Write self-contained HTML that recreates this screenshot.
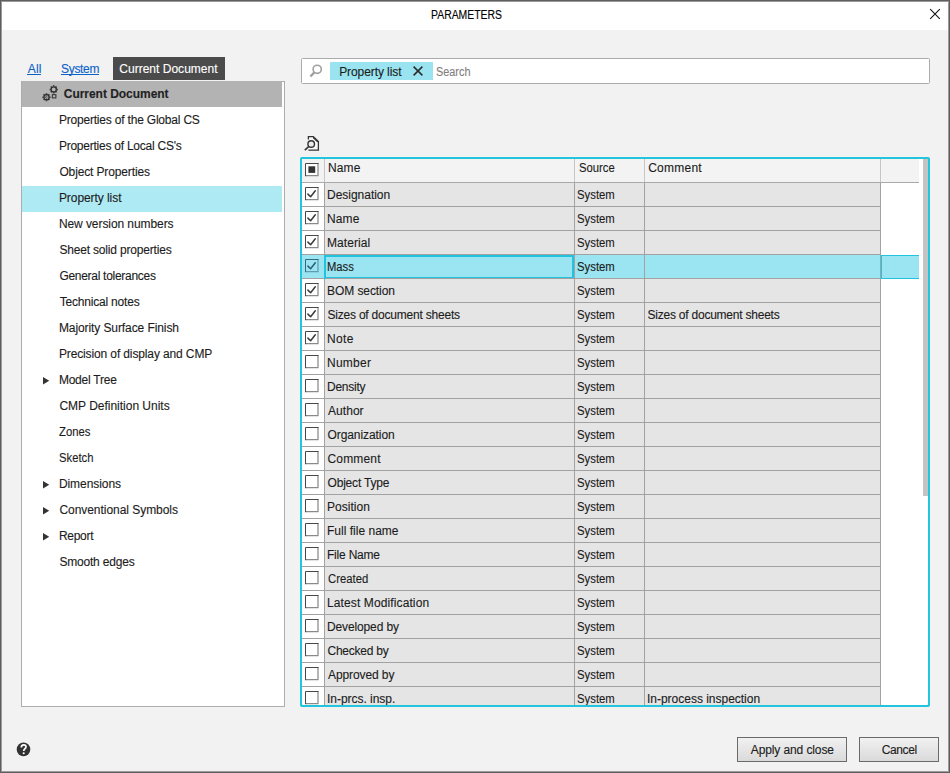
<!DOCTYPE html>
<html><head><meta charset="utf-8"><title>PARAMETERS</title>
<style>
html,body{margin:0;padding:0}
body{width:950px;height:773px;position:relative;overflow:hidden;background:#f2f2f2;font-family:"Liberation Sans",sans-serif;font-size:12px;color:#1c1c1c}
body div,body span.t,body svg{position:absolute}
span.t{line-height:16px;white-space:pre;display:block;-webkit-text-stroke:0.12px currentColor}
.w{color:#fff}.g{color:#7f7f7f}.b{font-weight:bold;-webkit-text-stroke:0;color:#222}
.lnk{color:#0b63c9}
</style></head><body>

<div style="left:0px;top:0px;width:950px;height:773px;background:#5e5e5e;"></div>
<div style="left:1px;top:1px;width:948px;height:771px;background:#9a9a9a;"></div>
<div style="left:2px;top:2px;width:946px;height:769px;background:#f2f2f2;"></div>
<div style="left:2px;top:2px;width:946px;height:28px;background:#ffffff;"></div>
<span class="t " style="left:431.13px;top:7.00px;transform-origin:0 0;transform:scaleX(0.8685);color:#000;">PARAMETERS</span>
<svg style="left:927px;top:6px" width="16" height="16" viewBox="0 0 16 16"><path d="M3.2 3.2 L12.8 12.8 M12.8 3.2 L3.2 12.8" stroke="#111" stroke-width="1.1" fill="none"/></svg>
<span class="t lnk" style="left:27.80px;top:61.00px;letter-spacing:0.150px;">All</span>
<div style="left:27px;top:74px;width:14px;height:1px;background:#0b63c9;"></div>
<span class="t lnk" style="left:61.10px;top:61.00px;letter-spacing:-0.330px;">System</span>
<div style="left:61px;top:74px;width:38px;height:1px;background:#0b63c9;"></div>
<div style="left:113px;top:57px;width:112px;height:23px;background:#4b4b4b;"></div>
<span class="t w" style="left:119.30px;top:61.00px;letter-spacing:0.013px;">Current Document</span>
<div style="left:21px;top:81px;width:264px;height:626px;background:#adadad;"></div>
<div style="left:22px;top:82px;width:262px;height:624px;background:#ffffff;"></div>
<div style="left:22px;top:81px;width:260px;height:26px;background:#b3b3b3;"></div>
<span class="t b" style="left:63.80px;top:86.00px;letter-spacing:-0.037px;">Current Document</span>
<svg style="left:40px;top:83px" width="20" height="22" viewBox="0 0 20 22"><g fill="none" stroke="#2c2c2c"><circle cx="13.70" cy="6.40" r="2.60" stroke-width="1.30"/><path d="M16.70 6.40 L17.75 6.40 M15.82 8.52 L16.56 9.26 M13.70 9.40 L13.70 10.45 M11.58 8.52 L10.84 9.26 M10.70 6.40 L9.65 6.40 M11.58 4.28 L10.84 3.54 M13.70 3.40 L13.70 2.35 M15.82 4.28 L16.56 3.54 " stroke-width="1.50"/><circle cx="6.50" cy="14.20" r="2.60" stroke-width="1.30"/><path d="M9.50 14.20 L10.55 14.20 M8.62 16.32 L9.36 17.06 M6.50 17.20 L6.50 18.25 M4.38 16.32 L3.64 17.06 M3.50 14.20 L2.45 14.20 M4.38 12.08 L3.64 11.34 M6.50 11.20 L6.50 10.15 M8.62 12.08 L9.36 11.34 " stroke-width="1.50"/><rect x="12.3" y="11.7" width="3.6" height="3.2" stroke-width="1"/><path d="M7.3 13.6 A1 1 0 1 0 7.4 14.8" stroke-width="0.8"/></g></svg>
<span class="t " style="left:58.90px;top:112.00px;letter-spacing:-0.196px;">Properties of the Global CS</span>
<span class="t " style="left:58.90px;top:138.00px;letter-spacing:-0.239px;">Properties of Local CS&#x27;s</span>
<span class="t " style="left:59.40px;top:164.00px;letter-spacing:-0.134px;">Object Properties</span>
<div style="left:22px;top:186px;width:260px;height:26px;background:#aeeaf4;"></div>
<span class="t " style="left:58.90px;top:190.00px;letter-spacing:-0.062px;">Property list</span>
<span class="t " style="left:58.90px;top:216.00px;letter-spacing:-0.075px;">New version numbers</span>
<span class="t " style="left:59.40px;top:242.00px;letter-spacing:-0.179px;">Sheet solid properties</span>
<span class="t " style="left:59.40px;top:268.00px;letter-spacing:-0.288px;">General tolerances</span>
<span class="t " style="left:59.65px;top:294.00px;letter-spacing:-0.193px;">Technical notes</span>
<span class="t " style="left:58.90px;top:320.00px;letter-spacing:-0.089px;">Majority Surface Finish</span>
<span class="t " style="left:58.90px;top:346.00px;letter-spacing:-0.124px;">Precision of display and CMP</span>
<span class="t " style="left:58.90px;top:372.00px;letter-spacing:-0.222px;">Model Tree</span>
<svg style="left:42px;top:376px" width="9" height="10" viewBox="0 0 9 10"><path d="M1 1 L7.2 4.8 L1 8.6 Z" fill="#333"/></svg>
<span class="t " style="left:59.40px;top:398.00px;letter-spacing:-0.011px;">CMP Definition Units</span>
<span class="t " style="left:59.43px;top:424.00px;transform-origin:0 0;transform:scaleX(0.9415);">Zones</span>
<span class="t " style="left:59.43px;top:450.00px;transform-origin:0 0;transform:scaleX(0.9380);">Sketch</span>
<span class="t " style="left:58.90px;top:476.00px;letter-spacing:-0.061px;">Dimensions</span>
<svg style="left:42px;top:480px" width="9" height="10" viewBox="0 0 9 10"><path d="M1 1 L7.2 4.8 L1 8.6 Z" fill="#333"/></svg>
<span class="t " style="left:59.40px;top:502.00px;letter-spacing:-0.042px;">Conventional Symbols</span>
<svg style="left:42px;top:506px" width="9" height="10" viewBox="0 0 9 10"><path d="M1 1 L7.2 4.8 L1 8.6 Z" fill="#333"/></svg>
<span class="t " style="left:58.90px;top:528.00px;letter-spacing:-0.280px;">Report</span>
<svg style="left:42px;top:532px" width="9" height="10" viewBox="0 0 9 10"><path d="M1 1 L7.2 4.8 L1 8.6 Z" fill="#333"/></svg>
<span class="t " style="left:59.40px;top:554.00px;letter-spacing:-0.191px;">Smooth edges</span>
<div style="left:301px;top:58px;width:627px;height:24px;background:#fff;border:1px solid #ababab;border-radius:1.5px"></div>
<svg style="left:306px;top:62px" width="18" height="18" viewBox="0 0 18 18"><circle cx="11.2" cy="7.3" r="4.1" fill="none" stroke="#a0a0a0" stroke-width="1.6"/><path d="M8.4 10.4 L4.4 14.5" stroke="#a0a0a0" stroke-width="2.4" fill="none"/></svg>
<div style="left:330px;top:62px;width:103px;height:18px;background:#99e4f0;"></div>
<span class="t " style="left:339.20px;top:64.00px;letter-spacing:-0.088px;">Property list</span>
<svg style="left:411px;top:64px" width="14" height="14" viewBox="0 0 14 14"><path d="M2.6 2.6 L11.4 11.4 M11.4 2.6 L2.6 11.4" stroke="#2b2b2b" stroke-width="1.5" fill="none"/></svg>
<span class="t g" style="left:436.45px;top:64.00px;transform-origin:0 0;transform:scaleX(0.9061);">Search</span>
<svg style="left:302px;top:133px" width="20" height="20" viewBox="0 0 20 20">
<path d="M6.4 17.2 L6.4 3.7 L11.3 3.7 L16.4 8.6 L16.4 17.2 Z" fill="#f9f9f9" stroke="none"/>
<path d="M6.4 6.4 L6.4 3.7 L11.3 3.7 L16.4 8.6 L16.4 17.2 L6.4 17.2" fill="none" stroke="#333" stroke-width="1.3"/>
<path d="M11.3 3.7 L16.4 8.6 L15.2 9.2 L10.8 4.9 Z" fill="#333"/>
<circle cx="9.2" cy="11" r="4.3" fill="#f2f2f2" stroke="none"/><circle cx="9.2" cy="11" r="3.3" fill="#ebebeb" stroke="#333" stroke-width="1.4"/>
<path d="M6.8 13.5 L2.8 17.2" stroke="#333" stroke-width="1.7" fill="none"/></svg>
<div style="left:300px;top:157px;width:630px;height:550px;background:#22c5e0;border-radius:2px;"></div>
<div style="left:302px;top:159px;width:626px;height:546px;background:#ffffff;border-radius:1px;"></div>
<div style="left:302px;top:159px;width:617px;height:23px;background:#f3f3f3;"></div>
<div style="left:302px;top:182px;width:617px;height:1px;background:#a9a9a9;"></div>
<div style="left:324px;top:159px;width:1px;height:23px;background:#c6c6c6;"></div>
<div style="left:574px;top:159px;width:1px;height:23px;background:#c6c6c6;"></div>
<div style="left:644px;top:159px;width:1px;height:23px;background:#c6c6c6;"></div>
<div style="left:880px;top:159px;width:1px;height:23px;background:#c6c6c6;"></div>
<span class="t " style="left:328.00px;top:160.00px;letter-spacing:0.100px;">Name</span>
<span class="t " style="left:578.53px;top:160.00px;transform-origin:0 0;transform:scaleX(0.9405);">Source</span>
<span class="t " style="left:648.20px;top:160.00px;letter-spacing:0.250px;">Comment</span>
<div style="left:923px;top:159px;width:5px;height:337px;background:#c4c4c4;"></div>
<svg style="left:305px;top:163px" width="15" height="14" viewBox="0 0 15 14"><rect x="0.5" y="0.5" width="12.7" height="12.2" fill="#ffffff" stroke="none"/><path d="M13.0 0.5 L13.0 12.6 L0.5 12.6" fill="none" stroke="#8a8a8a" stroke-width="1.25"/><path d="M0.5 13.2 L0.5 0.5 L13.6 0.5" fill="none" stroke="#484848" stroke-width="1"/><rect x="3.4" y="3.3" width="6.8" height="6.6" fill="#333"/></svg>
<div style="left:0;top:0;width:950px;height:705px;overflow:hidden">
<div style="left:325px;top:183px;width:249px;height:23px;background:#e5e5e5;"></div>
<div style="left:575px;top:183px;width:69px;height:23px;background:#e5e5e5;"></div>
<div style="left:645px;top:183px;width:235px;height:23px;background:#e5e5e5;"></div>
<div style="left:302px;top:206px;width:579px;height:1px;background:#a2a2a2;"></div>
<svg style="left:305px;top:187px" width="15" height="14" viewBox="0 0 15 14"><rect x="0.5" y="0.5" width="12.7" height="12.2" fill="#ffffff" stroke="none"/><path d="M13.0 0.5 L13.0 12.6 L0.5 12.6" fill="none" stroke="#8a8a8a" stroke-width="1.25"/><path d="M0.5 13.2 L0.5 0.5 L13.6 0.5" fill="none" stroke="#484848" stroke-width="1"/><path d="M2.9 7.1 L5.6 9.8 L10.3 3.8" fill="none" stroke="#3c3c3c" stroke-width="1.5" stroke-linejoin="round" stroke-linecap="round"/></svg>
<span class="t " style="left:327.00px;top:187.00px;letter-spacing:-0.020px;">Designation</span>
<span class="t " style="left:577.43px;top:187.00px;transform-origin:0 0;transform:scaleX(0.9445);">System</span>
<div style="left:325px;top:207px;width:249px;height:23px;background:#e5e5e5;"></div>
<div style="left:575px;top:207px;width:69px;height:23px;background:#e5e5e5;"></div>
<div style="left:645px;top:207px;width:235px;height:23px;background:#e5e5e5;"></div>
<div style="left:302px;top:230px;width:579px;height:1px;background:#a2a2a2;"></div>
<svg style="left:305px;top:211px" width="15" height="14" viewBox="0 0 15 14"><rect x="0.5" y="0.5" width="12.7" height="12.2" fill="#ffffff" stroke="none"/><path d="M13.0 0.5 L13.0 12.6 L0.5 12.6" fill="none" stroke="#8a8a8a" stroke-width="1.25"/><path d="M0.5 13.2 L0.5 0.5 L13.6 0.5" fill="none" stroke="#484848" stroke-width="1"/><path d="M2.9 7.1 L5.6 9.8 L10.3 3.8" fill="none" stroke="#3c3c3c" stroke-width="1.5" stroke-linejoin="round" stroke-linecap="round"/></svg>
<span class="t " style="left:327.00px;top:211.00px;letter-spacing:0.100px;">Name</span>
<span class="t " style="left:577.43px;top:211.00px;transform-origin:0 0;transform:scaleX(0.9445);">System</span>
<div style="left:325px;top:231px;width:249px;height:23px;background:#e5e5e5;"></div>
<div style="left:575px;top:231px;width:69px;height:23px;background:#e5e5e5;"></div>
<div style="left:645px;top:231px;width:235px;height:23px;background:#e5e5e5;"></div>
<div style="left:302px;top:254px;width:579px;height:1px;background:#a2a2a2;"></div>
<svg style="left:305px;top:235px" width="15" height="14" viewBox="0 0 15 14"><rect x="0.5" y="0.5" width="12.7" height="12.2" fill="#ffffff" stroke="none"/><path d="M13.0 0.5 L13.0 12.6 L0.5 12.6" fill="none" stroke="#8a8a8a" stroke-width="1.25"/><path d="M0.5 13.2 L0.5 0.5 L13.6 0.5" fill="none" stroke="#484848" stroke-width="1"/><path d="M2.9 7.1 L5.6 9.8 L10.3 3.8" fill="none" stroke="#3c3c3c" stroke-width="1.5" stroke-linejoin="round" stroke-linecap="round"/></svg>
<span class="t " style="left:327.00px;top:235.00px;letter-spacing:0.086px;">Material</span>
<span class="t " style="left:577.43px;top:235.00px;transform-origin:0 0;transform:scaleX(0.9445);">System</span>
<div style="left:302px;top:255px;width:22px;height:23px;background:#9ae5f1;"></div>
<div style="left:324px;top:255px;width:250px;height:24px;background:#9ae5f1;box-sizing:border-box;border:2px solid #22c3de;"></div>
<div style="left:575px;top:255px;width:69px;height:23px;background:#9ae5f1;"></div>
<div style="left:645px;top:255px;width:235px;height:23px;background:#9ae5f1;"></div>
<div style="left:881px;top:255px;width:38px;height:24px;background:#9ae5f1;box-sizing:border-box;border:1px solid #22c3de;border-right:none;"></div>
<div style="left:302px;top:278px;width:579px;height:1px;background:#a2a2a2;"></div>
<svg style="left:305px;top:259px" width="15" height="14" viewBox="0 0 15 14"><rect x="0.5" y="0.5" width="12.7" height="12.2" fill="none" stroke="none"/><path d="M13.0 0.5 L13.0 12.6 L0.5 12.6" fill="none" stroke="#5f9db3" stroke-width="1.25"/><path d="M0.5 13.2 L0.5 0.5 L13.6 0.5" fill="none" stroke="#356a82" stroke-width="1"/><path d="M2.9 7.1 L5.6 9.8 L10.3 3.8" fill="none" stroke="#2d5e78" stroke-width="1.5" stroke-linejoin="round" stroke-linecap="round"/></svg>
<span class="t " style="left:327.06px;top:259.00px;transform-origin:0 0;transform:scaleX(0.9358);">Mass</span>
<span class="t " style="left:577.43px;top:259.00px;transform-origin:0 0;transform:scaleX(0.9445);">System</span>
<div style="left:325px;top:279px;width:249px;height:23px;background:#e5e5e5;"></div>
<div style="left:575px;top:279px;width:69px;height:23px;background:#e5e5e5;"></div>
<div style="left:645px;top:279px;width:235px;height:23px;background:#e5e5e5;"></div>
<div style="left:302px;top:302px;width:579px;height:1px;background:#a2a2a2;"></div>
<svg style="left:305px;top:283px" width="15" height="14" viewBox="0 0 15 14"><rect x="0.5" y="0.5" width="12.7" height="12.2" fill="#ffffff" stroke="none"/><path d="M13.0 0.5 L13.0 12.6 L0.5 12.6" fill="none" stroke="#8a8a8a" stroke-width="1.25"/><path d="M0.5 13.2 L0.5 0.5 L13.6 0.5" fill="none" stroke="#484848" stroke-width="1"/><path d="M2.9 7.1 L5.6 9.8 L10.3 3.8" fill="none" stroke="#3c3c3c" stroke-width="1.5" stroke-linejoin="round" stroke-linecap="round"/></svg>
<span class="t " style="left:327.00px;top:283.00px;letter-spacing:-0.070px;">BOM section</span>
<span class="t " style="left:577.43px;top:283.00px;transform-origin:0 0;transform:scaleX(0.9445);">System</span>
<div style="left:325px;top:303px;width:249px;height:23px;background:#e5e5e5;"></div>
<div style="left:575px;top:303px;width:69px;height:23px;background:#e5e5e5;"></div>
<div style="left:645px;top:303px;width:235px;height:23px;background:#e5e5e5;"></div>
<div style="left:302px;top:326px;width:579px;height:1px;background:#a2a2a2;"></div>
<svg style="left:305px;top:307px" width="15" height="14" viewBox="0 0 15 14"><rect x="0.5" y="0.5" width="12.7" height="12.2" fill="#ffffff" stroke="none"/><path d="M13.0 0.5 L13.0 12.6 L0.5 12.6" fill="none" stroke="#8a8a8a" stroke-width="1.25"/><path d="M0.5 13.2 L0.5 0.5 L13.6 0.5" fill="none" stroke="#484848" stroke-width="1"/><path d="M2.9 7.1 L5.6 9.8 L10.3 3.8" fill="none" stroke="#3c3c3c" stroke-width="1.5" stroke-linejoin="round" stroke-linecap="round"/></svg>
<span class="t " style="left:327.50px;top:307.00px;letter-spacing:-0.213px;">Sizes of document sheets</span>
<span class="t " style="left:577.43px;top:307.00px;transform-origin:0 0;transform:scaleX(0.9445);">System</span>
<span class="t " style="left:647.50px;top:307.00px;letter-spacing:-0.226px;">Sizes of document sheets</span>
<div style="left:325px;top:327px;width:249px;height:23px;background:#e5e5e5;"></div>
<div style="left:575px;top:327px;width:69px;height:23px;background:#e5e5e5;"></div>
<div style="left:645px;top:327px;width:235px;height:23px;background:#e5e5e5;"></div>
<div style="left:302px;top:350px;width:579px;height:1px;background:#a2a2a2;"></div>
<svg style="left:305px;top:331px" width="15" height="14" viewBox="0 0 15 14"><rect x="0.5" y="0.5" width="12.7" height="12.2" fill="#ffffff" stroke="none"/><path d="M13.0 0.5 L13.0 12.6 L0.5 12.6" fill="none" stroke="#8a8a8a" stroke-width="1.25"/><path d="M0.5 13.2 L0.5 0.5 L13.6 0.5" fill="none" stroke="#484848" stroke-width="1"/><path d="M2.9 7.1 L5.6 9.8 L10.3 3.8" fill="none" stroke="#3c3c3c" stroke-width="1.5" stroke-linejoin="round" stroke-linecap="round"/></svg>
<span class="t " style="left:327.00px;top:331.00px;letter-spacing:0.350px;">Note</span>
<span class="t " style="left:577.43px;top:331.00px;transform-origin:0 0;transform:scaleX(0.9445);">System</span>
<div style="left:325px;top:351px;width:249px;height:23px;background:#e5e5e5;"></div>
<div style="left:575px;top:351px;width:69px;height:23px;background:#e5e5e5;"></div>
<div style="left:645px;top:351px;width:235px;height:23px;background:#e5e5e5;"></div>
<div style="left:302px;top:374px;width:579px;height:1px;background:#a2a2a2;"></div>
<svg style="left:305px;top:355px" width="15" height="14" viewBox="0 0 15 14"><rect x="0.5" y="0.5" width="12.7" height="12.2" fill="#ffffff" stroke="none"/><path d="M13.0 0.5 L13.0 12.6 L0.5 12.6" fill="none" stroke="#8a8a8a" stroke-width="1.25"/><path d="M0.5 13.2 L0.5 0.5 L13.6 0.5" fill="none" stroke="#484848" stroke-width="1"/></svg>
<span class="t " style="left:327.00px;top:355.00px;letter-spacing:0.240px;">Number</span>
<span class="t " style="left:577.43px;top:355.00px;transform-origin:0 0;transform:scaleX(0.9445);">System</span>
<div style="left:325px;top:375px;width:249px;height:23px;background:#e5e5e5;"></div>
<div style="left:575px;top:375px;width:69px;height:23px;background:#e5e5e5;"></div>
<div style="left:645px;top:375px;width:235px;height:23px;background:#e5e5e5;"></div>
<div style="left:302px;top:398px;width:579px;height:1px;background:#a2a2a2;"></div>
<svg style="left:305px;top:379px" width="15" height="14" viewBox="0 0 15 14"><rect x="0.5" y="0.5" width="12.7" height="12.2" fill="#ffffff" stroke="none"/><path d="M13.0 0.5 L13.0 12.6 L0.5 12.6" fill="none" stroke="#8a8a8a" stroke-width="1.25"/><path d="M0.5 13.2 L0.5 0.5 L13.6 0.5" fill="none" stroke="#484848" stroke-width="1"/></svg>
<span class="t " style="left:327.00px;top:379.00px;letter-spacing:-0.233px;">Density</span>
<span class="t " style="left:577.43px;top:379.00px;transform-origin:0 0;transform:scaleX(0.9445);">System</span>
<div style="left:325px;top:399px;width:249px;height:23px;background:#e5e5e5;"></div>
<div style="left:575px;top:399px;width:69px;height:23px;background:#e5e5e5;"></div>
<div style="left:645px;top:399px;width:235px;height:23px;background:#e5e5e5;"></div>
<div style="left:302px;top:422px;width:579px;height:1px;background:#a2a2a2;"></div>
<svg style="left:305px;top:403px" width="15" height="14" viewBox="0 0 15 14"><rect x="0.5" y="0.5" width="12.7" height="12.2" fill="#ffffff" stroke="none"/><path d="M13.0 0.5 L13.0 12.6 L0.5 12.6" fill="none" stroke="#8a8a8a" stroke-width="1.25"/><path d="M0.5 13.2 L0.5 0.5 L13.6 0.5" fill="none" stroke="#484848" stroke-width="1"/></svg>
<span class="t " style="left:328.00px;top:403.00px;letter-spacing:0.050px;">Author</span>
<span class="t " style="left:577.43px;top:403.00px;transform-origin:0 0;transform:scaleX(0.9445);">System</span>
<div style="left:325px;top:423px;width:249px;height:23px;background:#e5e5e5;"></div>
<div style="left:575px;top:423px;width:69px;height:23px;background:#e5e5e5;"></div>
<div style="left:645px;top:423px;width:235px;height:23px;background:#e5e5e5;"></div>
<div style="left:302px;top:446px;width:579px;height:1px;background:#a2a2a2;"></div>
<svg style="left:305px;top:427px" width="15" height="14" viewBox="0 0 15 14"><rect x="0.5" y="0.5" width="12.7" height="12.2" fill="#ffffff" stroke="none"/><path d="M13.0 0.5 L13.0 12.6 L0.5 12.6" fill="none" stroke="#8a8a8a" stroke-width="1.25"/><path d="M0.5 13.2 L0.5 0.5 L13.6 0.5" fill="none" stroke="#484848" stroke-width="1"/></svg>
<span class="t " style="left:327.50px;top:427.00px;letter-spacing:-0.077px;">Organization</span>
<span class="t " style="left:577.43px;top:427.00px;transform-origin:0 0;transform:scaleX(0.9445);">System</span>
<div style="left:325px;top:447px;width:249px;height:23px;background:#e5e5e5;"></div>
<div style="left:575px;top:447px;width:69px;height:23px;background:#e5e5e5;"></div>
<div style="left:645px;top:447px;width:235px;height:23px;background:#e5e5e5;"></div>
<div style="left:302px;top:470px;width:579px;height:1px;background:#a2a2a2;"></div>
<svg style="left:305px;top:451px" width="15" height="14" viewBox="0 0 15 14"><rect x="0.5" y="0.5" width="12.7" height="12.2" fill="#ffffff" stroke="none"/><path d="M13.0 0.5 L13.0 12.6 L0.5 12.6" fill="none" stroke="#8a8a8a" stroke-width="1.25"/><path d="M0.5 13.2 L0.5 0.5 L13.6 0.5" fill="none" stroke="#484848" stroke-width="1"/></svg>
<span class="t " style="left:327.50px;top:451.00px;letter-spacing:0.167px;">Comment</span>
<span class="t " style="left:577.43px;top:451.00px;transform-origin:0 0;transform:scaleX(0.9445);">System</span>
<div style="left:325px;top:471px;width:249px;height:23px;background:#e5e5e5;"></div>
<div style="left:575px;top:471px;width:69px;height:23px;background:#e5e5e5;"></div>
<div style="left:645px;top:471px;width:235px;height:23px;background:#e5e5e5;"></div>
<div style="left:302px;top:494px;width:579px;height:1px;background:#a2a2a2;"></div>
<svg style="left:305px;top:475px" width="15" height="14" viewBox="0 0 15 14"><rect x="0.5" y="0.5" width="12.7" height="12.2" fill="#ffffff" stroke="none"/><path d="M13.0 0.5 L13.0 12.6 L0.5 12.6" fill="none" stroke="#8a8a8a" stroke-width="1.25"/><path d="M0.5 13.2 L0.5 0.5 L13.6 0.5" fill="none" stroke="#484848" stroke-width="1"/></svg>
<span class="t " style="left:327.50px;top:475.00px;letter-spacing:-0.185px;">Object Type</span>
<span class="t " style="left:577.43px;top:475.00px;transform-origin:0 0;transform:scaleX(0.9445);">System</span>
<div style="left:325px;top:495px;width:249px;height:23px;background:#e5e5e5;"></div>
<div style="left:575px;top:495px;width:69px;height:23px;background:#e5e5e5;"></div>
<div style="left:645px;top:495px;width:235px;height:23px;background:#e5e5e5;"></div>
<div style="left:302px;top:518px;width:579px;height:1px;background:#a2a2a2;"></div>
<svg style="left:305px;top:499px" width="15" height="14" viewBox="0 0 15 14"><rect x="0.5" y="0.5" width="12.7" height="12.2" fill="#ffffff" stroke="none"/><path d="M13.0 0.5 L13.0 12.6 L0.5 12.6" fill="none" stroke="#8a8a8a" stroke-width="1.25"/><path d="M0.5 13.2 L0.5 0.5 L13.6 0.5" fill="none" stroke="#484848" stroke-width="1"/></svg>
<span class="t " style="left:327.00px;top:499.00px;letter-spacing:0.029px;">Position</span>
<span class="t " style="left:577.43px;top:499.00px;transform-origin:0 0;transform:scaleX(0.9445);">System</span>
<div style="left:325px;top:519px;width:249px;height:23px;background:#e5e5e5;"></div>
<div style="left:575px;top:519px;width:69px;height:23px;background:#e5e5e5;"></div>
<div style="left:645px;top:519px;width:235px;height:23px;background:#e5e5e5;"></div>
<div style="left:302px;top:542px;width:579px;height:1px;background:#a2a2a2;"></div>
<svg style="left:305px;top:523px" width="15" height="14" viewBox="0 0 15 14"><rect x="0.5" y="0.5" width="12.7" height="12.2" fill="#ffffff" stroke="none"/><path d="M13.0 0.5 L13.0 12.6 L0.5 12.6" fill="none" stroke="#8a8a8a" stroke-width="1.25"/><path d="M0.5 13.2 L0.5 0.5 L13.6 0.5" fill="none" stroke="#484848" stroke-width="1"/></svg>
<span class="t " style="left:327.00px;top:523.00px;letter-spacing:0.012px;">Full file name</span>
<span class="t " style="left:577.43px;top:523.00px;transform-origin:0 0;transform:scaleX(0.9445);">System</span>
<div style="left:325px;top:543px;width:249px;height:23px;background:#e5e5e5;"></div>
<div style="left:575px;top:543px;width:69px;height:23px;background:#e5e5e5;"></div>
<div style="left:645px;top:543px;width:235px;height:23px;background:#e5e5e5;"></div>
<div style="left:302px;top:566px;width:579px;height:1px;background:#a2a2a2;"></div>
<svg style="left:305px;top:547px" width="15" height="14" viewBox="0 0 15 14"><rect x="0.5" y="0.5" width="12.7" height="12.2" fill="#ffffff" stroke="none"/><path d="M13.0 0.5 L13.0 12.6 L0.5 12.6" fill="none" stroke="#8a8a8a" stroke-width="1.25"/><path d="M0.5 13.2 L0.5 0.5 L13.6 0.5" fill="none" stroke="#484848" stroke-width="1"/></svg>
<span class="t " style="left:327.00px;top:547.00px;letter-spacing:-0.206px;">File Name</span>
<span class="t " style="left:577.43px;top:547.00px;transform-origin:0 0;transform:scaleX(0.9445);">System</span>
<div style="left:325px;top:567px;width:249px;height:23px;background:#e5e5e5;"></div>
<div style="left:575px;top:567px;width:69px;height:23px;background:#e5e5e5;"></div>
<div style="left:645px;top:567px;width:235px;height:23px;background:#e5e5e5;"></div>
<div style="left:302px;top:590px;width:579px;height:1px;background:#a2a2a2;"></div>
<svg style="left:305px;top:571px" width="15" height="14" viewBox="0 0 15 14"><rect x="0.5" y="0.5" width="12.7" height="12.2" fill="#ffffff" stroke="none"/><path d="M13.0 0.5 L13.0 12.6 L0.5 12.6" fill="none" stroke="#8a8a8a" stroke-width="1.25"/><path d="M0.5 13.2 L0.5 0.5 L13.6 0.5" fill="none" stroke="#484848" stroke-width="1"/></svg>
<span class="t " style="left:327.53px;top:571.00px;transform-origin:0 0;transform:scaleX(0.9422);">Created</span>
<span class="t " style="left:577.43px;top:571.00px;transform-origin:0 0;transform:scaleX(0.9445);">System</span>
<div style="left:325px;top:591px;width:249px;height:23px;background:#e5e5e5;"></div>
<div style="left:575px;top:591px;width:69px;height:23px;background:#e5e5e5;"></div>
<div style="left:645px;top:591px;width:235px;height:23px;background:#e5e5e5;"></div>
<div style="left:302px;top:614px;width:579px;height:1px;background:#a2a2a2;"></div>
<svg style="left:305px;top:595px" width="15" height="14" viewBox="0 0 15 14"><rect x="0.5" y="0.5" width="12.7" height="12.2" fill="#ffffff" stroke="none"/><path d="M13.0 0.5 L13.0 12.6 L0.5 12.6" fill="none" stroke="#8a8a8a" stroke-width="1.25"/><path d="M0.5 13.2 L0.5 0.5 L13.6 0.5" fill="none" stroke="#484848" stroke-width="1"/></svg>
<span class="t " style="left:327.00px;top:595.00px;letter-spacing:0.114px;">Latest Modification</span>
<span class="t " style="left:577.43px;top:595.00px;transform-origin:0 0;transform:scaleX(0.9445);">System</span>
<div style="left:325px;top:615px;width:249px;height:23px;background:#e5e5e5;"></div>
<div style="left:575px;top:615px;width:69px;height:23px;background:#e5e5e5;"></div>
<div style="left:645px;top:615px;width:235px;height:23px;background:#e5e5e5;"></div>
<div style="left:302px;top:638px;width:579px;height:1px;background:#a2a2a2;"></div>
<svg style="left:305px;top:619px" width="15" height="14" viewBox="0 0 15 14"><rect x="0.5" y="0.5" width="12.7" height="12.2" fill="#ffffff" stroke="none"/><path d="M13.0 0.5 L13.0 12.6 L0.5 12.6" fill="none" stroke="#8a8a8a" stroke-width="1.25"/><path d="M0.5 13.2 L0.5 0.5 L13.6 0.5" fill="none" stroke="#484848" stroke-width="1"/></svg>
<span class="t " style="left:327.00px;top:619.00px;letter-spacing:-0.132px;">Developed by</span>
<span class="t " style="left:577.43px;top:619.00px;transform-origin:0 0;transform:scaleX(0.9445);">System</span>
<div style="left:325px;top:639px;width:249px;height:23px;background:#e5e5e5;"></div>
<div style="left:575px;top:639px;width:69px;height:23px;background:#e5e5e5;"></div>
<div style="left:645px;top:639px;width:235px;height:23px;background:#e5e5e5;"></div>
<div style="left:302px;top:662px;width:579px;height:1px;background:#a2a2a2;"></div>
<svg style="left:305px;top:643px" width="15" height="14" viewBox="0 0 15 14"><rect x="0.5" y="0.5" width="12.7" height="12.2" fill="#ffffff" stroke="none"/><path d="M13.0 0.5 L13.0 12.6 L0.5 12.6" fill="none" stroke="#8a8a8a" stroke-width="1.25"/><path d="M0.5 13.2 L0.5 0.5 L13.6 0.5" fill="none" stroke="#484848" stroke-width="1"/></svg>
<span class="t " style="left:327.50px;top:643.00px;letter-spacing:-0.239px;">Checked by</span>
<span class="t " style="left:577.43px;top:643.00px;transform-origin:0 0;transform:scaleX(0.9445);">System</span>
<div style="left:325px;top:663px;width:249px;height:23px;background:#e5e5e5;"></div>
<div style="left:575px;top:663px;width:69px;height:23px;background:#e5e5e5;"></div>
<div style="left:645px;top:663px;width:235px;height:23px;background:#e5e5e5;"></div>
<div style="left:302px;top:686px;width:579px;height:1px;background:#a2a2a2;"></div>
<svg style="left:305px;top:667px" width="15" height="14" viewBox="0 0 15 14"><rect x="0.5" y="0.5" width="12.7" height="12.2" fill="#ffffff" stroke="none"/><path d="M13.0 0.5 L13.0 12.6 L0.5 12.6" fill="none" stroke="#8a8a8a" stroke-width="1.25"/><path d="M0.5 13.2 L0.5 0.5 L13.6 0.5" fill="none" stroke="#484848" stroke-width="1"/></svg>
<span class="t " style="left:328.00px;top:667.00px;letter-spacing:-0.095px;">Approved by</span>
<span class="t " style="left:577.43px;top:667.00px;transform-origin:0 0;transform:scaleX(0.9445);">System</span>
<div style="left:325px;top:687px;width:249px;height:22px;background:#e5e5e5;"></div>
<div style="left:575px;top:687px;width:69px;height:22px;background:#e5e5e5;"></div>
<div style="left:645px;top:687px;width:235px;height:22px;background:#e5e5e5;"></div>
<svg style="left:305px;top:691px" width="15" height="14" viewBox="0 0 15 14"><rect x="0.5" y="0.5" width="12.7" height="12.2" fill="#ffffff" stroke="none"/><path d="M13.0 0.5 L13.0 12.6 L0.5 12.6" fill="none" stroke="#8a8a8a" stroke-width="1.25"/><path d="M0.5 13.2 L0.5 0.5 L13.6 0.5" fill="none" stroke="#484848" stroke-width="1"/></svg>
<span class="t " style="left:327.00px;top:691.00px;letter-spacing:-0.035px;">In-prcs. insp.</span>
<span class="t " style="left:577.43px;top:691.00px;transform-origin:0 0;transform:scaleX(0.9445);">System</span>
<span class="t " style="left:647.00px;top:691.00px;letter-spacing:-0.015px;">In-process inspection</span>
<div style="left:324px;top:183px;width:1px;height:522px;background:#a2a2a2;"></div>
<div style="left:574px;top:183px;width:1px;height:522px;background:#a2a2a2;"></div>
<div style="left:644px;top:183px;width:1px;height:522px;background:#a2a2a2;"></div>
<div style="left:880px;top:183px;width:1px;height:522px;background:#a2a2a2;"></div>
<div style="left:324px;top:255px;width:2px;height:24px;background:#22c3de;"></div>
</div>
<svg style="left:16px;top:742px" width="15" height="15" viewBox="0 0 15 15"><circle cx="7.5" cy="7.4" r="6.8" fill="#333"/><path d="M5.3 5.4 C5.3 3.6 6.4 2.9 7.7 2.9 C9.1 2.9 10 3.7 10 4.9 C10 6.7 7.7 6.8 7.7 9.1" fill="none" stroke="#fff" stroke-width="1.7"/><circle cx="7.7" cy="11.2" r="1.05" fill="#fff"/></svg>
<div style="left:737px;top:737px;width:108px;height:23px;border:1px solid #6a6a6a;background:linear-gradient(#f1f1f1,#dadada)"></div>
<span class="t " style="left:750.80px;top:742.00px;letter-spacing:-0.111px;">Apply and close</span>
<div style="left:859px;top:737px;width:78px;height:23px;border:1px solid #6a6a6a;background:linear-gradient(#f1f1f1,#dadada)"></div>
<span class="t " style="left:881.70px;top:742.00px;letter-spacing:-0.380px;">Cancel</span>
</body></html>
